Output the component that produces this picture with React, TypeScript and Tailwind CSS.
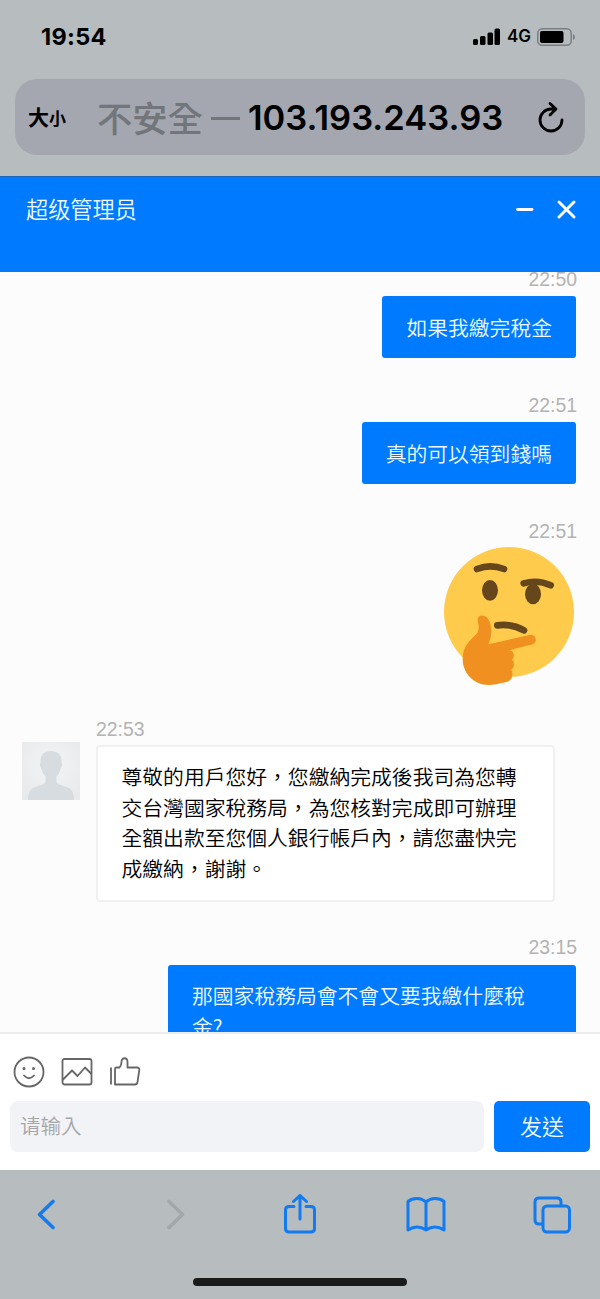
import React from 'react';

type Message = { time: string; lines: string[] };

const outgoing: Message[] = [
  { time: '22:50', lines: ['如果我繳完稅金'] },
  { time: '22:51', lines: ['真的可以領到錢嗎'] },
];

const reply: Message = {
  time: '22:53',
  lines: [
    '尊敬的用戶您好，您繳納完成後我司為您轉',
    '交台灣國家稅務局，為您核對完成即可辦理',
    '全額出款至您個人銀行帳戶內，請您盡快完',
    '成繳納，謝謝。',
  ],
};

const lastMessage: Message = { time: '23:15', lines: ['那國家稅務局會不會又要我繳什麼稅', '金?'] };

const Time = ({ children }: { children: React.ReactNode }) => (
  <div className="h-[34px] shrink-0 font-['Liberation_Sans',sans-serif] text-[19.4px] leading-[34px] font-normal text-[#b3b3b3]">
    {children}
  </div>
);

const Bubble = ({ lines }: { lines: string[] }) => (
  <div className="rounded-[3px] bg-[#007aff] px-6 pt-[15.5px] pb-[16.5px] text-[20.8px] leading-[30.4px] text-[#effcff]">
    {lines.map(line => (
      <div key={line} className="whitespace-nowrap">{line}</div>
    ))}
  </div>
);

const ThinkingFace = () => (
  <svg viewBox="72 110 390 416" className="block h-[138.67px] w-[130px]">
    <circle cx="267" cy="305" r="195" fill="#ffcb4c" />
    <g fill="none" stroke="#65471b" strokeWidth="20" strokeLinecap="round">
      <path d="M171 176q40-16 81 0" />
      <path d="M311 219q42-12 81 6" />
      <path d="M232 345q42-6 80 15" />
    </g>
    <ellipse cx="210" cy="240" rx="24" ry="31" fill="#65471b" />
    <ellipse cx="339" cy="251" rx="24" ry="31" fill="#65471b" />
    <path
      d="M173 330C171 313 194 311 204 325C217 345 217 375 205 402L328 374C347 370 355 395 338 402L268 420C282 422 286 438 276 448C285 456 283 472 274 479C281 489 277 510 262 514C240 519 222 524 205 524C162 524 128 489 128 446C128 408 150 390 166 375C179 362 177 350 173 330Z"
      fill="#ef9020"
    />
  </svg>
);

const Avatar = () => (
  <svg viewBox="0 0 58 58" className="mt-[30px] mr-4 block h-[58px] w-[58px] shrink-0">
    <defs>
      <radialGradient id="avatarBg" cx="50%" cy="40%" r="70%">
        <stop offset="0" stopColor="#f3f4f5" />
        <stop offset="1" stopColor="#e7e9eb" />
      </radialGradient>
    </defs>
    <path fill="url(#avatarBg)" d="M0 0h58v58H0z" />
    <path
      fill="#d6dce0"
      d="M29 9C36 9 40 13 39.500 20.500C40.500 22 40 25 38.500 27C37.500 31 36 33 34.500 34.500V40C36 43.500 45 44 49 47.500C51.500 50 52 54 52 58H6C6 54 6.500 50 9 47.500C13 44 22 43.500 23.500 40V34.500C22 33 20.500 31 19.500 27C18 25 17.500 22 18.500 20.500C18 13 22 9 29 9Z"
    />
  </svg>
);

const StatusBar = () => (
  <div className="flex h-[73px] items-center justify-between pr-[25px] pl-[41px] text-black">
    <span className="font-['Inter',sans-serif] text-[23.5px] font-bold tracking-[0.3px]">19:54</span>
    <div className="flex items-center">
      <svg viewBox="0 0 28 18" className="h-[18px] w-7">
        <rect x="0" y="11" width="5" height="6" rx="1.500" />
        <rect x="7" y="8" width="5.500" height="9" rx="1.500" />
        <rect x="14.500" y="4.500" width="5.500" height="12.500" rx="1.500" />
        <rect x="21.500" y="0.500" width="5.500" height="16.500" rx="1.500" />
      </svg>
      <span className="ml-1.5 font-['Inter',sans-serif] text-[17px] font-semibold">4G</span>
      <svg viewBox="0 0 38 18" className="ml-1.5 h-[18px] w-[38px]">
        <rect x="0.750" y="0.750" width="33.500" height="16.500" rx="4.500" fill="none" stroke="#7a7e81" strokeWidth="1.500" />
        <rect x="3" y="3" width="23.500" height="12" rx="2" />
        <path d="M36 6q2 1 2 3t-2 3z" fill="#7a7e81" />
      </svg>
    </div>
  </div>
);

const AddressBar = () => (
  <div className="mx-[15px] mt-[6px] flex h-[76px] items-center rounded-[22px] bg-[#a4a7b0] text-black">
    <div className="flex w-[82px] shrink-0 items-baseline pl-[13px] font-bold">
      <span className="text-[21px]">大</span>
      <span className="text-[17px]">小</span>
    </div>
    <span className="w-[114px] shrink-0 text-[35.300px] font-medium whitespace-nowrap text-[#727579]">不安全</span>
    <span className="mt-[2px] h-[3px] w-[29px] shrink-0 bg-[#727579]" />
    <span className="mt-[2px] ml-[8px] w-[258px] shrink-0 font-['Inter',sans-serif] text-[34.500px] font-semibold whitespace-nowrap">
      103.193.243.93
    </span>
    <svg viewBox="0 0 28 32" className="ml-[31px] h-8 w-7 shrink-0" fill="none" stroke="#000" strokeWidth="2.800" strokeLinecap="round" strokeLinejoin="round">
      <path d="M18 8H14A11 11 0 1 0 25 19M13 2.500l6 5.500-6 6" />
    </svg>
  </div>
);

const ChatHeader = () => (
  <div className="flex h-24 items-start justify-between border-t border-[#1a66b8] bg-[#007aff] pt-[14px] pr-6 pl-[26px]">
    <span className="text-[22.200px] leading-[34px] text-[#effcff]">超级管理员</span>
    <svg viewBox="0 0 64 22" className="mt-2 h-[22px] w-16" fill="none" stroke="#fff" strokeWidth="2.900" strokeLinecap="round">
      <path d="M5.500 10.500h14.500M47 3l15 15M62 3L47 18" />
    </svg>
  </div>
);

const Composer = () => (
  <div className="h-[138px] border-t-2 border-[#ececec] bg-white px-2.5">
    <div className="flex h-[67px] items-center gap-4 pt-[9px] pl-[3px]">
      <svg viewBox="0 0 32 32" className="h-8 w-8" fill="none" stroke="#666" strokeWidth="1.800" strokeLinecap="round">
        <circle cx="16" cy="16" r="14.500" />
        <path d="M11 19.500q5 5.500 10 0" />
        <circle cx="11" cy="12.500" r="1.500" fill="#666" stroke="none" />
        <circle cx="20.500" cy="12.500" r="1.500" fill="#666" stroke="none" />
      </svg>
      <svg viewBox="0 0 32 32" className="h-8 w-8" fill="none" stroke="#666" strokeWidth="1.800" strokeLinejoin="round">
        <rect x="1.500" y="3" width="29" height="25.500" rx="2" />
        <path d="M1.500 24l9.500-9.500 5.500 5.500 7.500-8.500 6.500 6.500" />
      </svg>
      <svg viewBox="0 0 32 32" className="h-8 w-8" fill="none" stroke="#666" strokeWidth="1.800" strokeLinejoin="round">
        <path d="M2 11.500v17M6 28.500V13c0-1 .6-1.500 1.500-1.500h3c1.500-1.500 2-3 2-5.500 0-5 6-5 6 0v5.500h9.500c1.500 0 2.500 1 2.300 2.500L28.500 26c-.3 1.700-1.300 2.500-2.500 2.500z" />
      </svg>
    </div>
    <div className="flex h-[51px] gap-2.5">
      <div className="w-[475px] rounded-lg bg-[#f2f3f7] pl-2.5 text-[20.500px] leading-[49px] text-[#a6a6a6]">请输入</div>
      <button className="w-24 rounded-[5px] bg-[#007aff] pb-[3px] text-[22px] leading-[48px] text-[#effcff]">发送</button>
    </div>
  </div>
);

const BrowserToolbar = () => (
  <div className="flex h-[129px] flex-col items-center bg-[#b7bcbf]">
    <div className="flex h-[90px] w-full items-center justify-between pr-[29px] pl-[35px]">
      <svg viewBox="0 0 22 32" className="h-8 w-[22px]" fill="none" stroke="#127bf0" strokeWidth="3.600" strokeLinecap="round" strokeLinejoin="round">
        <path d="M18 2.500L4.500 15.500 18 28.500" />
      </svg>
      <svg viewBox="0 0 22 32" className="ml-[25px] h-8 w-[22px]" fill="none" stroke="#a3a7aa" strokeWidth="3.600" strokeLinecap="round" strokeLinejoin="round">
        <path d="M4 2.500l13.500 13L4 28.500" />
      </svg>
      <svg viewBox="0 0 34 42" className="ml-[13px] h-[42px] w-[34px]" fill="none" stroke="#127bf0" strokeWidth="3" strokeLinecap="round" strokeLinejoin="round">
        <path d="M11 12.500H6q-3.500 0-3.500 3.500v18.500q0 3.500 3.500 3.500h22q3.500 0 3.500-3.500V16q0-3.500-3.500-3.500h-5M17 25V1.500M10.500 7.500L17 1.500l6.500 6" />
      </svg>
      <svg viewBox="0 0 40 36" className="ml-[7px] h-9 w-10" fill="none" stroke="#127bf0" strokeWidth="3" strokeLinecap="round" strokeLinejoin="round">
        <path d="M20 5v28M20 5C15 .5 7 .5 2 4.500V33q9-6 18 0 9-6 18 0V4.500C33 .5 25 .5 20 5z" />
      </svg>
      <svg viewBox="0 0 38 38" className="ml-[4px] h-[38px] w-[38px]" fill="none" stroke="#127bf0" strokeWidth="3">
        <rect x="10" y="10" width="26.500" height="26" rx="4" />
        <path d="M10 28H6q-4 0-4-4V6q0-4 4-4h18q4 0 4 4v4" />
      </svg>
    </div>
    <div className="mt-[18px] h-2 w-[214px] rounded-full bg-[#1b1b1c]" />
  </div>
);

export default function App() {
  return (
    <div lang="zh-TW" className="h-[1299px] w-[600px] overflow-hidden bg-white font-['Noto_Sans_CJK_TC','Noto_Sans_CJK_SC',sans-serif] font-[350]">
      <div className="h-[176px] bg-[#b7bcbf]">
        <StatusBar />
        <AddressBar />
      </div>
      <ChatHeader />

      {/* Conversation */}
      <div className="h-[760px] overflow-hidden bg-[#fcfcfc] pr-6 pl-[22px]">
        <div className="-mt-[10px] flex flex-col">
          {outgoing.map(m => (
            <div key={m.time} className="mb-[29.600px] flex flex-col items-end">
              <div className="-mr-px">
                <Time>{m.time}</Time>
              </div>
              <Bubble lines={m.lines} />
            </div>
          ))}
          <div className="mb-[26.300px] flex flex-col items-end">
            <div className="-mr-px">
              <Time>22:51</Time>
            </div>
            <div className="-mt-px mr-0.5">
              <ThinkingFace />
            </div>
          </div>
          <div className="mb-7 flex items-start">
            <Avatar />
            <div>
              <Time>{reply.time}</Time>
              <div className="-mt-px h-[157px] w-[459px] rounded-[4px] border-2 border-[#f0f0f0] bg-white px-6 pt-[14.500px] text-[20.800px] leading-[30.400px] text-black">
                {reply.lines.map(line => (
                  <div key={line} className="-ml-[0.5px] whitespace-nowrap">{line}</div>
                ))}
              </div>
            </div>
          </div>
          <div className="flex flex-col items-end">
            <div className="-mr-px">
              <Time>{lastMessage.time}</Time>
            </div>
            <div className="mt-px w-[408px]">
              <Bubble lines={lastMessage.lines} />
            </div>
          </div>
        </div>
      </div>

      <Composer />
      <BrowserToolbar />
    </div>
  );
}
